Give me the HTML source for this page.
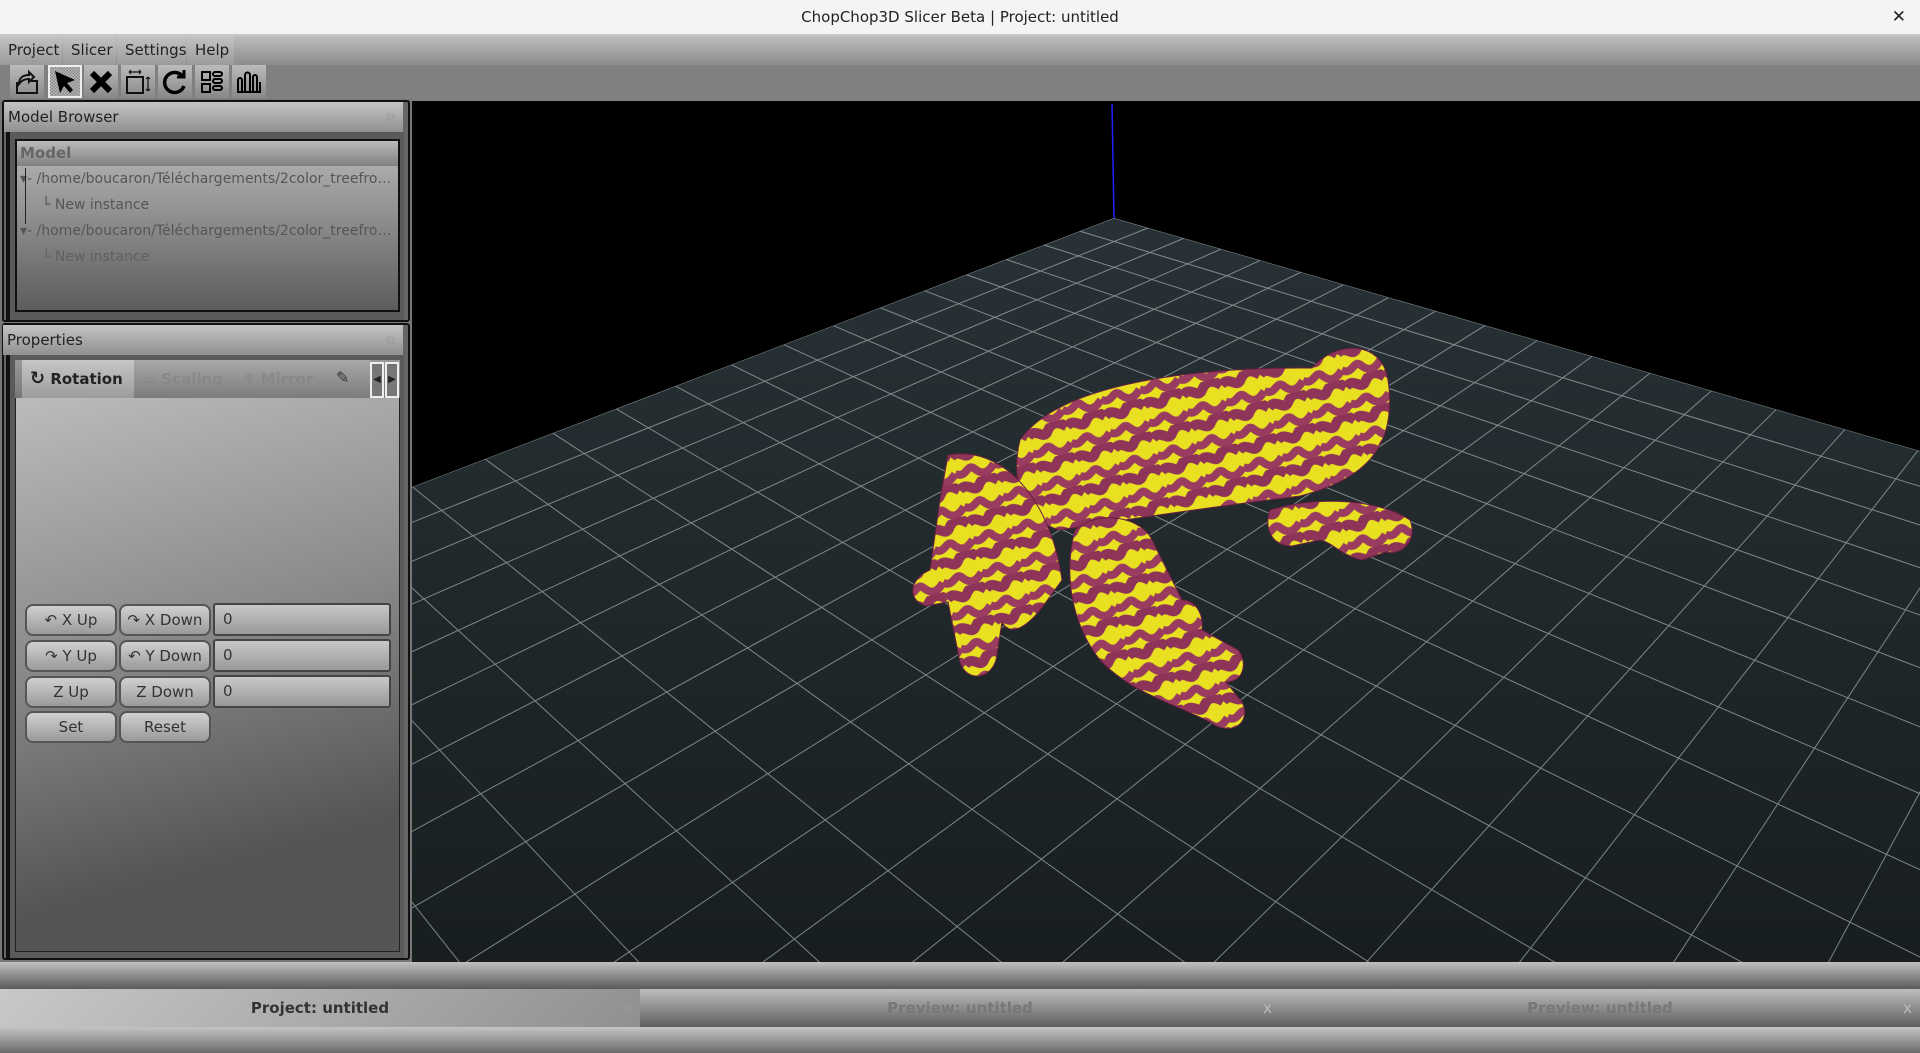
<!DOCTYPE html>
<html><head><meta charset="utf-8"><style>
*{box-sizing:border-box;margin:0;padding:0}
html,body{width:1920px;height:1053px;overflow:hidden}
body{background:#808080;font-family:"Liberation Sans","DejaVu Sans",sans-serif;position:relative;color:#222}
.abs{position:absolute}
#title{left:0;top:0;width:1920px;height:36px;background:#f4f4f4;border-bottom:2px solid #c8c8c0;text-align:center;font:15px "DejaVu Sans",sans-serif;line-height:34px;color:#222}
#menu{left:0;top:36px;width:1920px;height:29px;background:linear-gradient(#bdbdbd,#8c8c8c)}
.mi{position:absolute;top:0;height:29px;font:15px "DejaVu Sans",sans-serif;line-height:29px;color:#222;padding-left:8px}
#tool{left:0;top:65px;width:1920px;height:34px;background:#808080}
.tb{position:absolute;top:0;width:34px;height:33px;background:linear-gradient(#bbb,#888);display:flex;align-items:center;justify-content:center}
.hdr{background:linear-gradient(#c4c4c4,#909090);font:15px "DejaVu Sans",sans-serif;line-height:30px;color:#222;padding-left:4px}
.btn{position:absolute;height:32px;border:2px solid #555;border-radius:8px;background:linear-gradient(#d0d0d0,#9a9a9a);font:15px "DejaVu Sans",sans-serif;line-height:28px;color:#333;text-align:center}
.inp{position:absolute;height:33px;border:2px solid #444;border-radius:3px;background:linear-gradient(#c8c8c8,#999);font:15px "DejaVu Sans",sans-serif;line-height:29px;color:#333;padding-left:8px}
.tab{position:absolute;top:989px;height:38px;width:640px;font:bold 15px "DejaVu Sans",sans-serif;line-height:38px;text-align:center}
.tr{height:26px;line-height:26px;white-space:nowrap;overflow:hidden;text-overflow:ellipsis}
</style></head><body>
<div id="title" class="abs">ChopChop3D Slicer Beta | Project: untitled<span style="position:absolute;right:14px;top:0;font-weight:bold;font-size:17px">✕</span></div>
<div id="menu" class="abs">
<div class="mi" style="left:0;width:62px;background:linear-gradient(#c4c4c4,#9a9a9a)">Project</div>
<div class="mi" style="left:63px;width:53px;background:linear-gradient(#c4c4c4,#9a9a9a)">Slicer</div>
<div class="mi" style="left:117px;width:69px;background:linear-gradient(#c4c4c4,#9a9a9a)">Settings</div>
<div class="mi" style="left:187px;width:47px;background:linear-gradient(#c4c4c4,#9a9a9a)">Help</div>
</div>
<div id="tool" class="abs">
<div class="tb" style="left:10px"><svg width="28" height="28" viewBox="0 0 28 28" fill="none" stroke="#111" stroke-width="2"><path d="M4 14v11h20V13h-6"/><path d="M6 16c0-6 4-9 10-9V4l5 5-5 5v-3c-4 0-7 1-10 5z"/></svg></div>
<div class="tb" style="left:48px;background:repeating-conic-gradient(#888 0 25%,#bbb 0 50%) 0 0/3px 3px;border:2px solid #eee"><svg width="28" height="28" viewBox="0 0 28 28"><path d="M4 3l20 9-8 3 6 7-3 3-6-7-4 7z" fill="#000"/></svg></div>
<div class="tb" style="left:84px"><svg width="28" height="28" viewBox="0 0 28 28"><path d="M5 5l18 18M23 5L5 23" stroke="#000" stroke-width="6"/></svg></div>
<div class="tb" style="left:121px"><svg width="30" height="30" viewBox="0 0 30 30" fill="none" stroke="#111" stroke-width="2"><rect x="4" y="10" width="16" height="16"/><path d="M6 5h12M6 5l2-2M6 5l2 2M18 5l-2-2M18 5l-2 2M25 10v14M25 10l-2 2M25 10l2 2M25 24l-2-2M25 24l2-2" stroke-width="1.2"/></svg></div>
<div class="tb" style="left:158px"><svg width="28" height="28" viewBox="0 0 28 28" fill="none" stroke="#000" stroke-width="3.5"><path d="M22 9a10 10 0 1 0 1 9"/><path d="M16 9h7V2" stroke-width="3"/></svg></div>
<div class="tb" style="left:195px"><svg width="28" height="28" viewBox="0 0 28 28" fill="none" stroke="#000" stroke-width="2"><rect x="4" y="4" width="8" height="8"/><rect x="4" y="16" width="8" height="8"/><rect x="15" y="4" width="9" height="4" rx="2"/><rect x="15" y="11" width="9" height="4" rx="2"/><rect x="15" y="18" width="9" height="4" rx="2"/></svg></div>
<div class="tb" style="left:232px"><svg width="28" height="28" viewBox="0 0 28 28" fill="none" stroke="#000" stroke-width="2"><path d="M3 24V12a2 2 0 0 1 4 0v12M10 24V7a2 2 0 0 1 5 0v17M18 24V9a2 2 0 0 1 4 0v15M25 24V14M2 24h24"/></svg></div>
</div>
<!-- left panel -->
<div class="abs" style="left:0;top:99px;width:412px;height:864px;background:#777"></div>
<div class="abs" style="left:2px;top:100px;width:408px;height:222px;border:2px solid #111;border-radius:3px;background:#666"></div>
<div class="abs hdr" style="left:4px;top:102px;width:399px;height:30px">Model Browser<span style="position:absolute;right:8px;top:0;color:#999;font-size:12px">⧉</span></div>
<div class="abs" style="left:6px;top:132px;width:398px;height:188px;background:#5a5a5a;border-left:4px solid #111"></div>
<div class="abs" style="left:15px;top:139px;width:385px;height:173px;border:2px solid #111;background:linear-gradient(#b8b8b8,#8a8a8a 50%,#5c5c5c)"></div>
<div class="abs" style="left:17px;top:141px;width:381px;height:25px;background:linear-gradient(#bbb,#808080);font:bold 15px 'DejaVu Sans',sans-serif;line-height:25px;color:#666;padding-left:3px">Model</div>
<div class="abs" style="left:20px;top:166px;width:375px;font:14px 'DejaVu Sans',sans-serif;color:#555">
<div class="tr">▾- /home/boucaron/Téléchargements/2color_treefrog_....</div>
<div class="tr" style="padding-left:22px">└ New instance</div>
<div class="tr">▾- /home/boucaron/Téléchargements/2color_treefrog_....</div>
<div class="tr" style="padding-left:22px;color:#606060">└ New instance</div>
</div>
<div class="abs" style="left:25px;top:168px;width:1px;height:56px;background:#222"></div>
<div class="abs" style="left:2px;top:323px;width:408px;height:637px;border:2px solid #111;border-radius:3px;background:#666"></div>
<div class="abs hdr" style="left:3px;top:325px;width:400px;height:30px">Properties<span style="position:absolute;right:8px;top:0;color:#999;font-size:12px">⧉</span></div>
<div class="abs" style="left:6px;top:355px;width:398px;height:603px;background:#5a5a5a;border-left:4px solid #111"></div>
<div class="abs" style="left:15px;top:360px;width:385px;height:592px;border:1px solid #222;border-top:none;background:linear-gradient(165deg,#c2c2c2,#8a8a8a 45%,#555 80%)"></div>
<div class="abs" style="left:15px;top:360px;width:385px;height:38px;background:linear-gradient(#999,#777)"></div>
<div class="abs" style="left:22px;top:360px;width:112px;height:38px;background:linear-gradient(#c6c6c6,#9c9c9c);font:bold 15px 'DejaVu Sans',sans-serif;line-height:38px;color:#222;padding-left:8px"><span style="font-size:18px">↻</span>&nbsp;Rotation</div>
<div class="abs" style="left:134px;top:360px;width:100px;height:38px;background:linear-gradient(#a8a8a8,#7c7c7c);font:bold 15px 'DejaVu Sans',sans-serif;line-height:38px;color:#888;padding-left:8px;overflow:hidden;white-space:nowrap">▭ Scaling</div>
<div class="abs" style="left:234px;top:360px;width:94px;height:38px;background:linear-gradient(#a8a8a8,#7c7c7c);font:bold 15px 'DejaVu Sans',sans-serif;line-height:38px;color:#888;padding-left:8px;overflow:hidden;white-space:nowrap">♆ Mirror</div>
<div class="abs" style="left:328px;top:360px;width:42px;height:38px;background:linear-gradient(#a8a8a8,#7c7c7c);line-height:38px;color:#333;padding-left:8px">✎</div>
<div class="abs" style="left:370px;top:362px;width:14px;height:36px;border:2px solid #eee;background:#777;color:#222;font-size:10px;line-height:32px;text-align:center">◀</div>
<div class="abs" style="left:385px;top:362px;width:14px;height:36px;border:2px solid #eee;background:#777;color:#222;font-size:10px;line-height:32px;text-align:center">▶</div>
<div class="btn" style="left:25px;top:604px;width:92px">↶ X Up</div>
<div class="btn" style="left:119px;top:604px;width:92px">↷ X Down</div>
<div class="inp" style="left:213px;top:603px;width:178px">0</div>
<div class="btn" style="left:25px;top:640px;width:92px">↷ Y Up</div>
<div class="btn" style="left:119px;top:640px;width:92px">↶ Y Down</div>
<div class="inp" style="left:213px;top:639px;width:178px">0</div>
<div class="btn" style="left:25px;top:676px;width:92px">Z Up</div>
<div class="btn" style="left:119px;top:676px;width:92px">Z Down</div>
<div class="inp" style="left:213px;top:675px;width:178px">0</div>
<div class="btn" style="left:25px;top:711px;width:92px">Set</div>
<div class="btn" style="left:119px;top:711px;width:92px">Reset</div>
<!-- viewport -->
<svg class="abs" style="left:412px;top:101px" width="1508" height="861" viewBox="412 101 1508 861">
<defs>
<clipPath id="fc"><path d="M1114 218L412 487V962H1920V451Z"/></clipPath>
<linearGradient id="fl" x1="0" y1="0" x2="0" y2="1"><stop offset="0" stop-color="#283236"/><stop offset="1" stop-color="#181e20"/></linearGradient>
<pattern id="st" width="40" height="34" patternUnits="userSpaceOnUse" patternTransform="rotate(-15)">
<rect width="40" height="34" fill="#e8e020"/>
<path d="M0 8c10-8 14 8 20 0s12-8 20 0" stroke="#8e3458" stroke-width="10" fill="none"/>
<path d="M0 25c10 8 14-8 20 0s12 8 20 0" stroke="#9a3c60" stroke-width="8" fill="none"/>
</pattern>
</defs>
<rect x="412" y="101" width="1508" height="861" fill="#000"/>
<path d="M1114 218L412 487V962H1920V451Z" fill="url(#fl)"/>
<g id="grid" clip-path="url(#fc)" stroke="#c0c8c8" stroke-width="1" opacity="0.6"></g>
<path d="M1112 104L1114 218" stroke="#2020ff" stroke-width="1.5"/>
<g fill="url(#st)" stroke="#6a2040" stroke-width="1">
<path d="M1270 510C1320 495 1380 500 1410 520C1418 540 1402 556 1386 552L1362 560C1342 556 1332 542 1320 540L1292 546C1270 546 1264 526 1270 510Z"/>
<path d="M1020 440C1060 382 1200 367 1312 368C1336 340 1382 340 1388 380C1398 450 1362 480 1300 496C1220 506 1120 520 1060 530C1022 520 1010 480 1020 440Z"/>
<path d="M948 455C1000 445 1050 495 1062 580L1046 602C1032 622 1012 640 1002 622L996 660C990 680 966 682 960 662L948 602L926 606C906 600 910 578 930 570L940 500Z"/>
<path d="M1075 530C1100 508 1142 518 1152 540L1182 600C1194 600 1204 612 1202 630L1238 650C1248 662 1244 682 1226 682L1242 702C1252 722 1232 738 1210 722C1170 702 1130 692 1100 660C1070 622 1064 572 1075 530Z"/>
</g>
</svg>
<!-- bottom -->
<div class="abs" style="left:0;top:962px;width:1920px;height:27px;background:linear-gradient(#c0c0c0,#5a5a5a)"></div>
<div class="tab" style="left:0;background:linear-gradient(135deg,#c8c8c8,#909090);color:#333">Project: untitled<span style="position:absolute;right:8px;color:#999;font-weight:normal">x</span></div>
<div class="tab" style="left:640px;background:linear-gradient(#bdbdbd,#5e5e5e);color:#777">Preview: untitled<span style="position:absolute;right:8px;color:#bbb;font-weight:normal">x</span></div>
<div class="tab" style="left:1280px;background:linear-gradient(#bdbdbd,#5e5e5e);color:#777">Preview: untitled<span style="position:absolute;right:8px;color:#bbb;font-weight:normal">x</span></div>
<div class="abs" style="left:0;top:1027px;width:1920px;height:26px;background:linear-gradient(#c4c4c4,#6a6a6a)"></div>
<script>
(function(){
var B=[1114,218],VA=[2518,-320],VB=[-498,-248],a=0.0208,b=0.0238;
function pBR(k){var f=1/(1-a*k);return [VB[0]+(B[0]-VB[0])*f,VB[1]+(B[1]-VB[1])*f];}
function pBL(k){var f=1/(1-b*k);return [VA[0]+(B[0]-VA[0])*f,VA[1]+(B[1]-VA[1])*f];}
var s='';
for(var k=0;k<45;k++){
 if(1-a*k>0.04){var p=pBR(k);var q=[p[0]+(p[0]-VA[0])*6,p[1]+(p[1]-VA[1])*6];s+='<line x1="'+p[0]+'" y1="'+p[1]+'" x2="'+q[0]+'" y2="'+q[1]+'"/>';}
 if(1-b*k>0.04){var p2=pBL(k);var q2=[p2[0]+(p2[0]-VB[0])*6,p2[1]+(p2[1]-VB[1])*6];s+='<line x1="'+p2[0]+'" y1="'+p2[1]+'" x2="'+q2[0]+'" y2="'+q2[1]+'"/>';}
}
document.getElementById('grid').innerHTML=s;
})();
</script>
</body></html>
